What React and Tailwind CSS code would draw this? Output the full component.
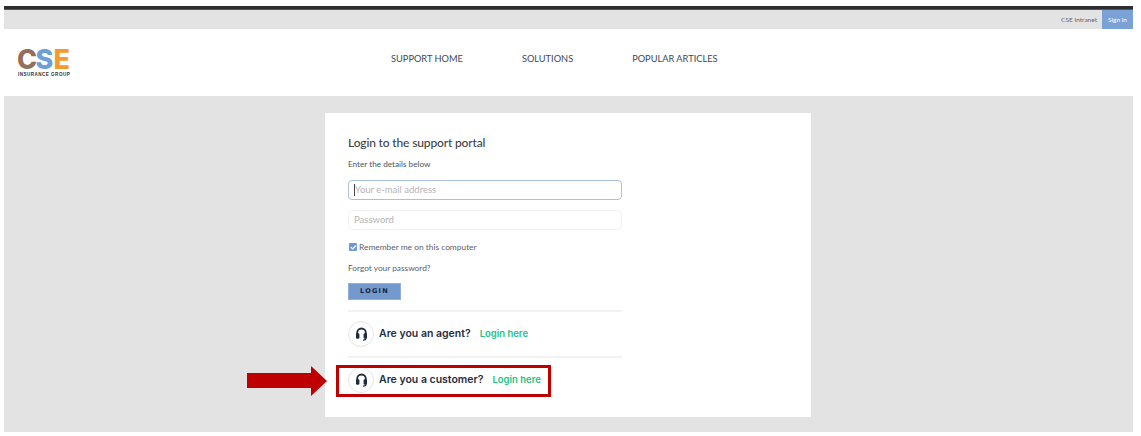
import { Check } from 'lucide-react'

const sans = { fontFamily: 'Lato, "Open Sans", sans-serif' }

const HeadsetIcon = () => (
  <svg width="13" height="14" viewBox="0 0 13 14" fill="none" className="text-[#1d2b3f]">
    <path d="M2.2 8V5.8a4.3 4.3 0 0 1 8.6 0V8" stroke="currentColor" strokeWidth="1.8" />
    <rect x="1" y="6.2" width="3.4" height="5.6" rx="1.2" fill="currentColor" />
    <rect x="8.6" y="6.2" width="3.4" height="5.6" rx="1.2" fill="currentColor" />
    <path d="M11 11.2c0 1.3-1 1.9-3 1.9" stroke="currentColor" strokeWidth="1.2" />
  </svg>
)

const HelpRow = ({ label }) => (
  <div className="flex items-center">
    <div className="mr-[5px] flex h-[26px] w-[26px] shrink-0 items-center justify-center rounded-full border border-[#e6e6e6] bg-white">
      <HeadsetIcon />
    </div>
    <span className="mr-[9px] font-['Inter',sans-serif] text-[10.5px] font-semibold text-[#1f2d44]">{label}</span>
    <a className="font-['Inter',sans-serif] text-[9.5px] font-semibold text-[#25c184]">Login here</a>
  </div>
)

const App = () => {
  return (
    <div className="h-[436px] w-[1141px] overflow-hidden bg-white pl-1 pr-2 pt-[6px] font-['Lato',sans-serif]">
      {/* top strip */}
      <div className="h-1 border-b border-[#555] bg-[#2e2e30]" />
      <div className="flex h-[19px] items-center justify-end bg-[#e3e3e3]">
        <a className="mr-[5px] text-[6.5px] text-[#666]">CSE Intranet</a>
        <a className="flex h-[19px] w-[31px] items-center justify-center bg-[#7aa2d6] text-[6.5px] text-white">Sign in</a>
      </div>

      {/* header */}
      <header className="relative flex h-[67px] items-center bg-white">
        <svg className="ml-[14px]" width="54" height="50" viewBox="0 0 54 50">
          <g fontFamily="Inter, sans-serif" fontWeight="800" fontSize="27">
            <text x="-1" y="31" fill="#94705a">C</text>
            <text x="17.5" y="31" fill="#6e9fd8">S</text>
            <text x="35.5" y="31" fill="#f59a2f">E</text>
          </g>
          <text x="0" y="38" fontFamily="'Liberation Sans', sans-serif" fontWeight="700" fontSize="4.6" letterSpacing="0.45" fill="#333">INSURANCE GROUP</text>
        </svg>
        <nav className="absolute left-[387px] top-[23px] flex gap-[59px] text-[9.25px] text-[#3d4a57]">
          <a>SUPPORT HOME</a>
          <a>SOLUTIONS</a>
          <a>POPULAR ARTICLES</a>
        </nav>
      </header>

      {/* body */}
      <main className="relative h-[336px] bg-[#e3e3e3] pl-[321px] pt-[17px]">
        <div className="h-[304px] w-[486px] bg-white pl-[23px] pt-[22px]" style={sans}>
          <div className="w-[274px]">
            <h1 className="text-[12px] font-medium leading-4 tracking-[-0.15px] text-[#3f3f3f]">Login to the support portal</h1>
            <p className="mt-[7px] text-[8.2px] leading-3 text-[#4a5560]">Enter the details below</p>

            <div className="mt-[10px] flex h-5 items-center rounded-[4px] border border-[#a9c1e0] px-[5px]">
              <span className="h-3 w-px bg-[#444]" />
              <span className="text-[9.5px] text-[#b5b5b5]">Your e-mail address</span>
            </div>
            <div className="mt-[10px] flex h-5 items-center rounded-[4px] border border-[#f1f1f1] px-[5px]">
              <span className="text-[9.5px] text-[#b5b5b5]">Password</span>
            </div>

            <label className="ml-[1px] mt-[12px] flex h-[10px] items-center gap-[2px]">
              <span className="flex h-2 w-2 items-center justify-center rounded-[1px] bg-[#6f9ad2]">
                <Check size={7} strokeWidth={4} className="text-white" />
              </span>
              <span className="text-[8.4px] text-[#5a6068]">Remember me on this computer</span>
            </label>

            <p className="mt-[10px] text-[8.3px] leading-3 text-[#5a6068]">Forgot your password?</p>

            <button className="mt-[9px] h-[17px] w-[53px] border border-[#8fb0db] bg-[#7399cf] font-['DejaVu_Sans',sans-serif] text-[6.5px] font-bold tracking-[1.3px] text-[#14233a]">
              LOGIN
            </button>

            <div className="mt-[10px] border-t-2 border-[#f2f2f2] pb-[9px] pt-[9px]">
              <HelpRow label="Are you an agent?" />
            </div>
            <div className="border-t-2 border-[#f2f2f2] pt-[9px]">
              <HelpRow label="Are you a customer?" />
            </div>
          </div>
        </div>

        {/* annotation overlay */}
        <div className="absolute left-[332px] top-[269px] h-[32px] w-[215px] border-[3px] border-[#bf0000]" />
        <svg className="absolute left-[243px] top-[269px]" width="80" height="32" viewBox="0 0 80 32">
          <path d="M0 8H64V1L80 16L64 31V23H0Z" fill="#bf0000" />
        </svg>
      </main>
    </div>
  )
}

export default App
